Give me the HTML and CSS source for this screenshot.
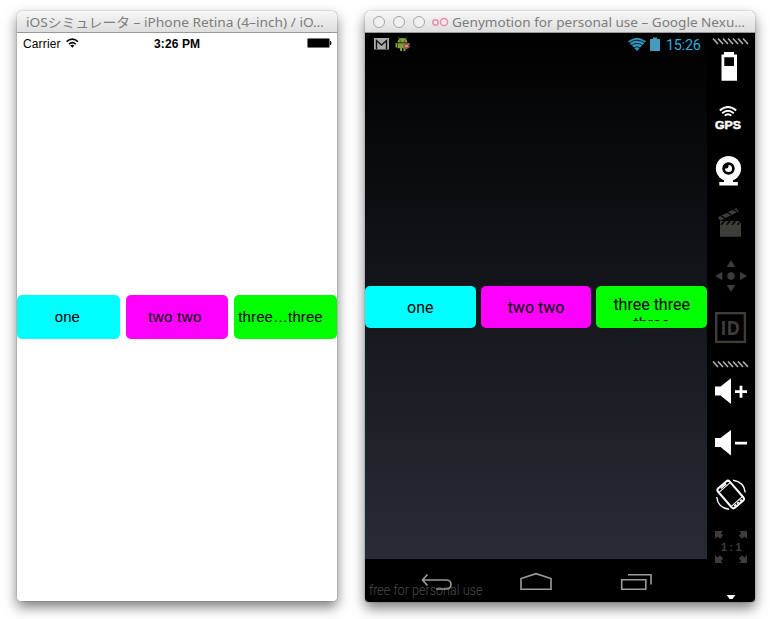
FILE: index.html
```html
<!DOCTYPE html>
<html lang="ja">
<head>
<meta charset="utf-8">
<title>Simulators</title>
<link rel="stylesheet" href="styles.css">
</head>
<body>
<main class="desktop">
  <section class="window ios">
    <header class="titlebar"><svg class="title" width="320" height="21"><text x="9" y="16" textLength="298" lengthAdjust="spacingAndGlyphs">iOSシミュレータ – iPhone Retina (4–inch) / iO…</text></svg></header>
    <div class="ios-screen">
      <svg class="ios-status" width="320" height="20" viewBox="17 33 320 20">
        <text x="23" y="47.500" textLength="37.5">Carrier</text>
        <g fill="none" stroke="#000" stroke-width="1.6"><path d="M66.6 41.7Q72.3 36.6 78 41.7M68.9 44.1Q72.3 41.2 75.7 44.1"/></g>
        <path d="M70.2 45.4Q72.3 44 74.4 45.4L72.3 47.7Z"/>
        <text class="clock" x="154" y="47.500" textLength="46">3:26 PM</text>
        <rect x="307.5" y="38.5" width="22" height="9" rx="1" fill="#000" stroke="#777"/>
        <path d="M330 41h1q1 2 0 4h-1z"/>
      </svg>
      <div class="ios-buttons">
        <div class="button cyan"><span>one</span></div>
        <div class="button magenta"><span>two two</span></div>
        <div class="button green"><span>three…three</span></div>
      </div>
    </div>
  </section>

  <section class="window android">
    <header class="titlebar"><svg class="title" width="390" height="21" viewBox="365 11 390 21">
      <g fill="#f1f1f1" stroke="#a5a5a5"><circle cx="379" cy="22" r="5.5"/><circle cx="399" cy="22" r="5.5"/><circle cx="419" cy="22" r="5.5"/></g>
      <g fill="none" stroke="#ec8bad" stroke-width="1.5"><circle cx="435.5" cy="22.5" r="2.7"/><circle cx="444" cy="22" r="3.6"/></g>
      <text x="452" y="27" textLength="293" lengthAdjust="spacingAndGlyphs">Genymotion for personal use – Google Nexu…</text>
    </svg></header>
    <div class="android-body">
      <div class="device">
        <div class="android-screen">
          <svg class="android-status" width="342" height="22" viewBox="365 33 342 22">
            <rect x="374" y="38" width="15" height="11.500" fill="#aaa"/>
            <path d="M376.500 49V40.500L381.500 45L386.500 40.500V49" fill="none" stroke="#151515" stroke-width="1.400"/>
            <g fill="#7f9d38"><path d="M397.5 42.5a5 4.6 0 0 1 10 0zM397.5 43.3h10v5h-2v2.7h-2v-2.7h-1.5v2.7h-2v-2.7h-2.5zM395.5 43h1.5v4.5h-1.5zM408 43h1.5v4h-1.5z"/><path d="M399.5 39l-1-1.5M405.5 39l1-1.5" stroke="#7f9d38"/></g>
            <circle cx="400.5" cy="41" r=".6" fill="#222"/><circle cx="404.5" cy="41" r=".6" fill="#222"/>
            <circle cx="406.5" cy="46" r="3" fill="#a64a48"/><path d="M405.3 44.8l2.4 2.4m0-2.4l-2.4 2.4" stroke="#ddd" stroke-width=".8"/>
            <path d="M628 41.2Q637 34.2 646 41.2L637 51Z" fill="#3693bb"/>
            <path d="M629 43.2Q637 37.2 645 43.2M631 45.7Q637 41 643 45.7M633.3 48Q637 45.3 640.7 48" fill="none" stroke="#00141c" stroke-width=".9"/>
            <path d="M653 37.5h4v1.5h3v12h-10V39h3z" fill="#4699bf"/>
            <text x="666" y="49.500" textLength="35">15:26</text>
          </svg>
          <div class="android-buttons">
            <div class="button cyan"><span>one</span></div>
            <div class="button magenta"><span>two two</span></div>
            <div class="button green"><span>three three three</span></div>
          </div>
        </div>
        <svg class="navbar" width="342" height="43" viewBox="365 559 342 43">
          <text x="369" y="595" textLength="113.5" lengthAdjust="spacingAndGlyphs">free for personal use</text>
          <g fill="none" stroke="#9b9b9b" stroke-width="1.6"><path d="M427.500 574.500L422.500 580L427.500 585.500M423 580H446.500C452.500 580 452.500 589 446.500 589H436"/><path d="M521 589.300V578.500L536 573.700L551 578.500V589.300Z"/><path d="M621.700 579.700H645.800V589.300H621.700ZM628 574.700H651V584.500"/></g>
        </svg>
      </div>
      <nav class="tools">
        <svg class="ticks" width="48" height="8" viewBox="707 33 48 8"><path d="M713 38.500l5 5.500m0-5.500l5 5.500m0-5.500l5 5.500m0-5.500l5 5.500m0-5.500l5 5.500m0-5.500l5 5.500m0-5.500l5 5.500"/></svg>
        <svg width="48" height="52" viewBox="707 41 48 52"><path fill="#fff" fill-rule="evenodd" d="M724 52h10v2.500h3V80.700h-15.500V54.500H724zM724.300 57.300v8.700h9.700v-8.700z"/></svg>
        <svg width="48" height="52" viewBox="707 93 48 52"><g fill="none" stroke="#fff" stroke-width="1.9"><path d="M719.800 110.500Q728 103.500 736.200 110.500M722.200 113.200Q728 108.500 733.800 113.200M724.700 115.700Q728 113 731.300 115.700"/></g><text class="gps" x="715" y="129" textLength="26" lengthAdjust="spacingAndGlyphs">GPS</text></svg>
        <svg width="48" height="52" viewBox="707 145 48 52"><g fill="#fff"><circle cx="728.500" cy="168.500" r="12.600"/><path d="M724 179h9v3h4.800v3.500h-18.500V182h4.700z"/></g><circle cx="728.500" cy="168.500" r="6.200"/><circle cx="728.500" cy="168.500" r="3.500" fill="#fff"/><path d="M724.500 166a4 4 0 0 1 4-2v2.200a2.200 2.200 0 0 1-2.200 2.200H724z"/></svg>
        <svg class="off" width="48" height="52" viewBox="707 197 48 52"><path d="M720 221h21v15.700h-21zM718 217.300l18.500-9.300 2 3.500-18.500 9.300z"/><path d="M721 224.700l3.500-3.700m2 3.700l3.500-3.700m2 3.700l3.500-3.700m2 3.700l3.500-3.700M721 216l4 2m2-5.500l4 2m2-5l4 2" stroke="#000" stroke-width="1.300"/></svg>
        <svg class="off" width="48" height="52" viewBox="707 249 48 52"><path d="M731 260l4.200 7h-8.400zM731 292l4.200-7h-8.400zM715.300 276l7-4.200v8.400zM747 276l-7-4.200v8.400z"/><circle cx="731" cy="276" r="3.700"/></svg>
        <svg class="off" width="48" height="52" viewBox="707 301 48 52"><rect x="716.200" y="313.200" width="28.700" height="28.700" fill="none" stroke="#3d3d3a" stroke-width="2.400"/><text class="id" x="720.500" y="335" textLength="19.500" lengthAdjust="spacingAndGlyphs">ID</text></svg>
        <svg class="ticks" width="48" height="12" viewBox="707 353 48 12"><path d="M713 361.500l5 5.500m0-5.500l5 5.500m0-5.500l5 5.500m0-5.500l5 5.500m0-5.500l5 5.500m0-5.500l5 5.500m0-5.500l5 5.500"/></svg>
        <svg width="48" height="52" viewBox="707 365 48 52"><path d="M715 386.500h5.500l10.500-8.300v25.800l-10.500-8.500H715zM735 390.300h4.600v-4.600h2.800v4.600h4.600v2.800h-4.600v4.600h-2.800v-4.600H735z" fill="#fff"/></svg>
        <svg width="48" height="52" viewBox="707 417 48 52"><path d="M715 438h5.500l10.500-8v25.500l-10.500-8.500H715zM735 441.700h12v2.800h-12z" fill="#fff"/></svg>
        <svg width="48" height="52" viewBox="707 469 48 52"><g fill="none" stroke="#fff"><g transform="translate(730.700 494.500) rotate(-41)"><rect x="-7.700" y="-12.800" width="15.400" height="25.600" rx="2.500" stroke-width="2"/><path d="M-7-9.300H7M-7 9.300H7" stroke-width="1"/><path d="M-3.500-11h7M-5 11h2.500M-1.200 11h2.400M2.500 11h2.500" stroke-width="1.600"/></g><path d="M733 480.300Q744 482 745.300 492.500M716.700 497Q718 508 729 509.300" stroke-width="1.400"/></g></svg>
        <svg class="off" width="48" height="52" viewBox="707 521 48 52"><path d="M715 531h8l-2.200 2.200 2.400 2.400-3.200 3.200-2.400-2.400L715 539zM747 531h-8l2.200 2.200-2.400 2.400 3.200 3.200 2.400-2.400L747 539zM715 563h8l-2.200-2.200 2.400-2.400-3.200-3.200-2.400 2.400L715 555zM747 563h-8l2.200-2.200-2.400-2.400 3.200-3.200 2.400 2.400L747 555z"/><text class="ratio" x="721" y="551" textLength="20.500">1:1</text></svg>
        <svg width="48" height="29" viewBox="707 573 48 29"><path d="M726.700 595h8.600l-2.800 4h-3z" fill="#fff"/></svg>
      </nav>
    </div>
  </section>
</main>
</body>
</html>
```
FILE: styles.css
```css
body {
  margin: 0;
  background: #fff;
  overflow: hidden;
}

.desktop {
  display: flex;
  align-items: flex-start;
  gap: 28px;
  height: 619px;
  padding: 11px 15px 0 17px;
  box-sizing: border-box;
}

.window {
  border-radius: 5px 5px 4px 4px;
  box-shadow: 0 0 1px rgba(0, 0, 0, .75), 0 6px 13px rgba(0, 0, 0, .52);
}

.ios { width: 320px; }
.android { width: 390px; }
svg { display: block; }

.titlebar {
  height: 21px;
  border-bottom: 1px solid #999;
  border-radius: 5px 5px 0 0;
  background: linear-gradient(#f7f7f7, #dedede);
}

.title text {
  font: 13px "Noto Sans", "Noto Sans CJK JP", sans-serif;
  fill: #7d7d7d;
}

.ios-screen {
  height: 568px;
  background: #fff;
  border-radius: 0 0 4px 4px;
}

.ios-status text { font: 12px "Liberation Sans", sans-serif; }
.ios-status .clock { font-weight: bold; }

.button {
  display: flex;
  justify-content: center;
  border-radius: 5px;
  box-sizing: border-box;
  text-align: center;
  color: #000;
}

.cyan { background: #0ff; }
.magenta { background: #f0f; }
.green { background: #0f0; }

.ios-buttons {
  display: grid;
  grid-template-columns: repeat(3, 1fr);
  gap: 6px;
  margin-top: 242px;
  height: 44px;
  font: 15px/44px "Liberation Sans", sans-serif;
  white-space: nowrap;
}

.ios-buttons .cyan { padding-right: 2px; }

.ios-buttons .magenta {
  padding-right: 4px;
  letter-spacing: .35px;
}

.ios-buttons .green {
  justify-content: flex-start;
  padding-left: 4px;
}

.ios-buttons .green span { letter-spacing: .1px; }

.android-body {
  display: flex;
  height: 569px;
  background: #000;
  border-radius: 0 0 4px 4px;
}

.device { width: 342px; }

.android-screen {
  height: 526px;
  background: linear-gradient(#000, #272c35);
}

.android-status text {
  font: 14.5px Roboto, sans-serif;
  fill: #34abdc;
}

.android-buttons {
  display: grid;
  grid-template-columns: repeat(3, 1fr);
  gap: 5px;
  padding-top: 230.500px;
  font: 16px/19px Roboto, sans-serif;
}

.android-buttons .button {
  height: 42.500px;
  padding: 12.500px 10px 0;
}

.android-buttons .green {
  padding-top: 9.500px;
}

.android-buttons .green span {
  height: 26px;
  overflow: hidden;
}

.navbar text {
  font: 300 14px Roboto, sans-serif;
  fill: #4c4c4c;
}

.tools { width: 48px; }

.ticks {
  overflow: visible;
  fill: none;
  stroke: #b0b0b0;
  stroke-width: 1.6;
}

.off { fill: #3d3d3a; }
.gps {
  font: bold 11.5px "Liberation Sans", sans-serif;
  fill: #fff;
  stroke: #fff;
  stroke-width: .5;
}
.id { font: bold 19.5px "Open Sans", sans-serif; }
.ratio { font: bold 11px "Liberation Sans", sans-serif; }
```
